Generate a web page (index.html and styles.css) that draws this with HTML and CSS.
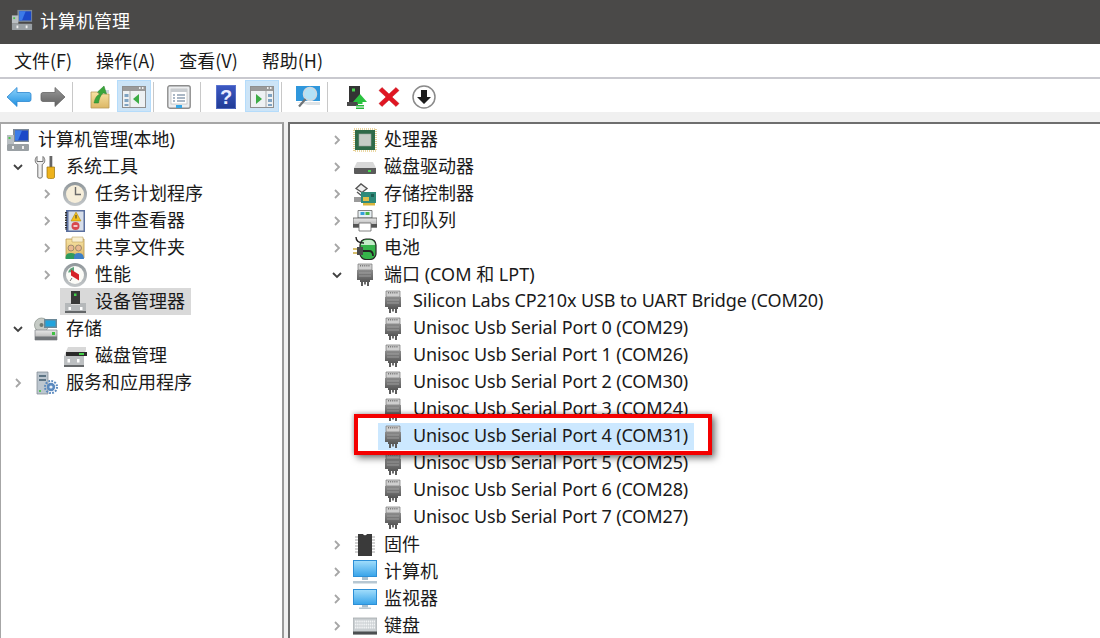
FILE: index.html
```html
<!DOCTYPE html>
<html lang="zh-CN">
<head>
<meta charset="utf-8">
<title>计算机管理</title>
<link rel="stylesheet" href="styles.css">
</head>
<body>
<svg class="sprite" xmlns="http://www.w3.org/2000/svg" aria-hidden="true">
  <defs>
    <linearGradient id="gBlue" x1="0" y1="0" x2="0" y2="1"><stop offset="0" stop-color="#8fd3fb"/><stop offset="1" stop-color="#1e8fe0"/></linearGradient>
    <linearGradient id="gGray" x1="0" y1="0" x2="0" y2="1"><stop offset="0" stop-color="#9a9a9a"/><stop offset="1" stop-color="#5f5f5f"/></linearGradient>
    <linearGradient id="gFolder" x1="0" y1="0" x2="0" y2="1"><stop offset="0" stop-color="#f7e3a4"/><stop offset="1" stop-color="#dcb765"/></linearGradient>
    <linearGradient id="gScreen" x1="0" y1="0" x2="0" y2="1"><stop offset="0" stop-color="#9fdcfb"/><stop offset="1" stop-color="#3aa5ea"/></linearGradient>
    <linearGradient id="gHelp" x1="0" y1="0" x2="0" y2="1"><stop offset="0" stop-color="#3d59c4"/><stop offset="1" stop-color="#1f3a94"/></linearGradient>
    <linearGradient id="gMetal" x1="0" y1="0" x2="0" y2="1"><stop offset="0" stop-color="#e8e8e8"/><stop offset="1" stop-color="#a8a8a8"/></linearGradient>
    <linearGradient id="gPort" x1="0" y1="0" x2="0" y2="1"><stop offset="0" stop-color="#8c8c8c"/><stop offset="1" stop-color="#565656"/></linearGradient>
    <linearGradient id="gRing" x1="0" y1="0" x2="0" y2="1"><stop offset="0" stop-color="#8f969a"/><stop offset="1" stop-color="#c4c8ca"/></linearGradient>
  </defs>
  <symbol id="i-mgmt" viewBox="0 0 24 24">
    <rect x="7" y="1" width="16" height="13" fill="#7d8a99"/><rect x="9" y="2.500" width="13" height="10" fill="#1b49c8"/><path d="M9 2.500h7l-4 10H9z" fill="#3c7be8"/>
    <rect x="1" y="7" width="7" height="9" fill="#b9bec2"/><rect x="2.500" y="9" width="2" height="2" fill="#4cc34c"/>
    <rect x="1" y="16" width="22" height="7" rx="1" fill="#9aa0a4"/><rect x="6" y="18" width="2" height="3" fill="#eee"/><rect x="16" y="18" width="2" height="3" fill="#eee"/>
  </symbol>
  <symbol id="i-tools" viewBox="0 0 24 24">
    <path d="M3 1.500C.5 3.500 .5 8 3.800 9.500V22c0 1.500 4.400 1.500 4.400 0V9.500C11.500 8 11.500 3.500 9 1.500V6.500H3z" fill="#efefef" stroke="#707070" stroke-width="1"/>
    <rect x="15.500" y="1" width="2.800" height="11" fill="#666"/><path d="M13 12h7.500v10c0 1.200-1 1.700-3.500 1.700s-4-.5-4-1.700z" fill="#eeb31d" stroke="#9a7109" stroke-width=".7"/>
  </symbol>
  <symbol id="i-clock" viewBox="0 0 24 24">
    <circle cx="12" cy="12" r="12" fill="url(#gRing)"/><circle cx="12" cy="12" r="9" fill="#f6eeda"/><path d="M12.500 5v7.500H18" fill="none" stroke="#6a6a6a" stroke-width="1.400"/>
  </symbol>
  <symbol id="i-event" viewBox="0 0 24 24">
    <rect x="3" y="1" width="19" height="22" fill="#5a6f9e"/><rect x="5.500" y="2.500" width="15" height="19" fill="#d8dfea"/><path d="M3 3v18" stroke="#333" stroke-width="2" stroke-dasharray="1.500 1"/>
    <path d="M13 3l5 9H8z" fill="#f3c01c" stroke="#a67d00" stroke-width=".5"/><rect x="12.500" y="6" width="1" height="3.500" fill="#333"/>
    <circle cx="12.500" cy="17" r="4" fill="#d8484f"/><rect x="10.500" y="16.300" width="4" height="1.400" fill="#fff"/>
  </symbol>
  <symbol id="i-share" viewBox="0 0 24 24">
    <path d="M3 3h18v19H3z" fill="url(#gFolder)" stroke="#b7954c" stroke-width=".8"/><path d="M9 1h11v5H9z" fill="#f8efd2" stroke="#b7954c" stroke-width=".5"/>
    <circle cx="8" cy="12" r="3" fill="#e9b98f" stroke="#555" stroke-width=".5"/><path d="M2.500 23c0-5 2-6 5.500-6s5 1 5.500 6z" fill="#2e9a5c"/>
    <circle cx="15.500" cy="12" r="3" fill="#e9b98f" stroke="#555" stroke-width=".5"/><path d="M11 23c0-5 1.500-6 4.500-6s5 1 5.500 6z" fill="#3d7fc6"/>
  </symbol>
  <symbol id="i-perf" viewBox="0 0 24 24">
    <circle cx="12" cy="12" r="12" fill="url(#gRing)"/><circle cx="12" cy="12" r="9" fill="#fbfbf7"/><path d="M5 9.500a8 8 0 0 1 6-5.500v5z" fill="#5aa27a"/><path d="M8 6.500v6l8 5v-6z" fill="#d6242a"/><path d="M9 15l-2 3" stroke="#777" stroke-width="1"/>
  </symbol>
  <symbol id="i-devmgr" viewBox="0 0 24 24">
    <rect x="8" y="1" width="9" height="13" fill="#383838"/><rect x="11" y="3.500" width="2.500" height="2.500" fill="#43d14a"/>
    <path d="M2 13h6v2h9v-2h6v10H2z" fill="#b5b8ba"/><rect x="2" y="21" width="21" height="2" fill="#636668"/><rect x="5.500" y="17" width="2.500" height="3" fill="#fff"/><rect x="17" y="17" width="2.500" height="3" fill="#fff"/>
  </symbol>
  <symbol id="i-storage" viewBox="0 0 24 24">
    <circle cx="7.500" cy="8" r="7" fill="#c6cbc6" stroke="#88908a" stroke-width=".7"/><circle cx="7.500" cy="8" r="2" fill="#6f7a72"/>
    <path d="M10 2h13v9H10z" fill="#6b8898"/><rect x="11.500" y="3.500" width="10" height="6" fill="#21a3dc"/>
    <path d="M1 13h22v10H1z" fill="url(#gMetal)" stroke="#7f8386" stroke-width=".7"/><rect x="1" y="19.500" width="22" height="3.500" fill="#717579"/><rect x="18" y="15" width="3" height="3" fill="#3fc043"/>
  </symbol>
  <symbol id="i-disk" viewBox="0 0 24 24">
    <path d="M5 3h18v3l-3 6H1z" fill="#d8d8d8"/><path d="M3 8h21v4H3z" fill="#2b2b2b"/><rect x="16" y="9" width="5" height="2" fill="#46d14a"/>
    <path d="M1 12h20v11H1z" fill="#bcbfc1"/><rect x="1" y="21" width="20" height="2" fill="#66696b"/><rect x="4.500" y="15" width="2.500" height="3.500" fill="#fff"/><rect x="14" y="15" width="2.500" height="3.500" fill="#fff"/>
  </symbol>
  <symbol id="i-services" viewBox="0 0 24 24">
    <path d="M3 1h11v22H3z" fill="#bcc6cf" stroke="#7b858e" stroke-width=".7"/><rect x="5" y="4" width="7" height="2" fill="#5d7484"/><rect x="5" y="8" width="7" height="2" fill="#5d7484"/><rect x="5" y="19" width="2" height="2" fill="#5ac45a"/>
    <circle cx="17" cy="16" r="4.200" fill="#5a89bf"/><circle cx="17" cy="16" r="6" fill="none" stroke="#5a89bf" stroke-width="2" stroke-dasharray="1.800 1.300"/><circle cx="17" cy="16" r="1.600" fill="#e8f0f8"/>
  </symbol>
  <symbol id="i-cpu" viewBox="0 0 24 24">
    <rect x="1" y="1" width="22" height="22" fill="none" stroke="#d8b14a" stroke-width="1.200" stroke-dasharray="1 1"/>
    <rect x="2" y="2" width="20" height="20" fill="#2f6a48"/><rect x="6" y="6" width="12" height="12" fill="#c6cdc6" stroke="#9aa39a" stroke-width=".6"/>
  </symbol>
  <symbol id="i-hdd" viewBox="0 0 24 24">
    <path d="M4 7h16l3 6H1z" fill="#d8d8d8"/><path d="M1 13h22v5a1 1 0 0 1-1 1H2a1 1 0 0 1-1-1z" fill="#5a5a5a"/><rect x="15" y="15" width="3" height="2" fill="#49d94f"/>
  </symbol>
  <symbol id="i-ctrl" viewBox="0 0 24 24">
    <path d="M3 6.500L8 2l6 4.500-5 4z" fill="#f0f0f0" stroke="#555" stroke-width="1.400"/><path d="M4 10l5 4 5-1" fill="none" stroke="#555" stroke-width="1.400"/>
    <path d="M1 15h11v5H1z" fill="#9a9a9a"/><rect x="8" y="10" width="15" height="11" fill="#2f8b7a"/><rect x="10" y="15" width="6" height="4" fill="#e0c04a"/><rect x="18" y="12" width="3" height="3" fill="#1d5f52"/><path d="M10 21h12v2.500H10z" fill="#d9b53d"/>
  </symbol>
  <symbol id="i-printer" viewBox="0 0 24 24">
    <path d="M5 1.500h14V9H5z" fill="#e8f0f4" stroke="#666" stroke-width=".8"/><rect x="7.500" y="3" width="4" height="3" fill="#34a0d8"/><rect x="12.500" y="3" width="4" height="3" fill="#45b649"/>
    <path d="M0 9h24v9H0z" fill="url(#gMetal)" stroke="#555" stroke-width=".8"/><rect x="0" y="15" width="24" height="3.500" fill="#555"/><path d="M6 14h12v8H6z" fill="#fff" stroke="#666" stroke-width=".8"/>
  </symbol>
  <symbol id="i-battery" viewBox="0 0 24 24">
    <rect x="7" y="3" width="16" height="20.500" rx="6" fill="#35b34a" stroke="#262626" stroke-width="1.200"/><path d="M8 9a6 6 0 0 1 6-5h3a5 5 0 0 1 5 5z" fill="#c6ecca"/>
    <path d="M3 1c0 4 3 6 8 6" fill="none" stroke="#222" stroke-width="1.400"/><path d="M4 11h6v8H4z" fill="#4a4a4a"/><path d="M0 13h4M0 17h4" stroke="#c9a93e" stroke-width="1.600"/><path d="M10 15h6c3 0 4 2 4 5" fill="none" stroke="#222" stroke-width="1.800"/>
  </symbol>
  <symbol id="i-port" viewBox="0 0 24 24">
    <path d="M5 1h14v6H5z" fill="#cfcfcf" stroke="#777" stroke-width=".7"/><path d="M7 2.800h10" stroke="#777" stroke-width="1.600" stroke-dasharray="1.100 1"/>
    <path d="M4 7h16v10h-3v2H7v-2H4z" fill="url(#gPort)"/><path d="M6 10h12M6 13h12" stroke="#a8a8a8" stroke-width=".8"/><path d="M8 19h2v4H8zM14 19h2v4h-2z" fill="#5c5c5c"/><rect x="11" y="19" width="2" height="2.500" fill="#6c6c6c"/>
  </symbol>
  <symbol id="i-fw" viewBox="0 0 24 24">
    <path d="M5 1h5a2.200 2.200 0 0 0 4 0h5v22H5z" fill="#3a3a3a"/><path d="M2 4h3M2 7h3M2 10h3M2 13h3M2 16h3M2 19h3M19 4h3M19 7h3M19 10h3M19 13h3M19 16h3M19 19h3" stroke="#c4c4c4" stroke-width="1.700"/>
  </symbol>
  <symbol id="i-pc" viewBox="0 0 24 24">
    <rect x="0" y="0" width="24" height="17" fill="#2d8fd6"/><rect x="1" y="1" width="22" height="15" fill="url(#gScreen)"/><rect x="9" y="17" width="6" height="3" fill="#a9c0cf"/><rect x="0" y="21" width="24" height="2.500" fill="#b7c7d2"/>
  </symbol>
  <symbol id="i-mon" viewBox="0 0 24 24">
    <rect x="0" y="2" width="24" height="16" fill="#2d8fd6"/><rect x="1" y="3" width="22" height="14" fill="url(#gScreen)"/><rect x="9" y="18" width="6" height="2.500" fill="#a9c0cf"/><rect x="6" y="20.500" width="12" height="1.500" fill="#b7c7d2"/>
  </symbol>
  <symbol id="i-kbd" viewBox="0 0 24 24">
    <rect x="0" y="4" width="24" height="16" fill="#c9ced1" stroke="#9aa0a3" stroke-width=".7"/><path d="M2 7.500h20M2 10.500h20M2 13.500h20" stroke="#f2f4f5" stroke-width="1.800" stroke-dasharray="1.500 .6"/><rect x="0" y="17.500" width="24" height="3" fill="#4c4f51"/>
  </symbol>
  <symbol id="t-back" viewBox="0 0 26 24">
    <path d="M1 12L11 2.500V7.500H23a2 2 0 0 1 2 2v5a2 2 0 0 1-2 2H11v5z" fill="url(#gBlue)" stroke="#2b87d1" stroke-width=".8"/>
  </symbol>
  <symbol id="t-fwd" viewBox="0 0 26 24">
    <path d="M25 12L15 2.500V7.500H3a2 2 0 0 0-2 2v5a2 2 0 0 0 2 2h12v5z" fill="url(#gGray)" stroke="#666" stroke-width=".8"/>
  </symbol>
  <symbol id="t-up" viewBox="0 0 24 24">
    <path d="M3 7h6l2 2h10v14H3z" fill="url(#gFolder)" stroke="#b89a58" stroke-width=".8"/><path d="M16 5h5v3h-5z" fill="#cfd6dc"/>
    <path d="M6 18c1-5 3-8 6-9L9.500 7 16 1l2.500 8-3-1c-2 1-4 4-5 10z" fill="#3aa53a" stroke="#26832a" stroke-width=".5"/>
  </symbol>
  <symbol id="t-left" viewBox="0 0 24 24">
    <rect x=".5" y="1.500" width="23" height="21" fill="#eef1f3" stroke="#8f8f8f"/><rect x="1" y="2" width="22" height="4" fill="#9a9a9a"/><path d="M17 3h1.500M20 3h1.500" stroke="#eee" stroke-width="2"/>
    <path d="M8 6v16" stroke="#aaa"/><path d="M2.500 9h4v3h-4zM2.500 14h4v3h-4zM2.500 19h4v2h-4z" fill="#7fa3c2"/><path d="M17 9v10l-6-5z" fill="#3cac45"/>
  </symbol>
  <symbol id="t-right" viewBox="0 0 24 24">
    <rect x=".5" y="1.500" width="23" height="21" fill="#eef1f3" stroke="#8f8f8f"/><rect x="1" y="2" width="22" height="4" fill="#9a9a9a"/><path d="M17 3h1.500M20 3h1.500" stroke="#eee" stroke-width="2"/>
    <path d="M16 6v16" stroke="#aaa"/><path d="M18 9h4v3h-4zM18 14h4v3h-4zM18 19h4v2h-4z" fill="#7fa3c2"/><path d="M6 9v10l6-5z" fill="#3cac45"/>
  </symbol>
  <symbol id="t-props" viewBox="0 0 24 24">
    <rect x=".8" y=".8" width="22.400" height="22.400" rx="2" fill="#eceef0" stroke="#8c8c8c" stroke-width="1.400"/><rect x="4" y="4" width="16" height="15" fill="#fff" stroke="#b0b0b0" stroke-width=".6"/><rect x="4" y="4" width="16" height="3" fill="#c8ccd0"/>
    <path d="M6 10h2M6 13h2M6 16h2M10 10h8M10 13h8M10 16h8" stroke="#8ea0b3" stroke-width="1.300"/><rect x="9" y="20" width="6" height="3" fill="#37a7e6"/>
  </symbol>
  <symbol id="t-search" viewBox="0 0 24 24">
    <rect x="0" y="1" width="24" height="15" fill="#2f97dc"/><path d="M0 17h24v3H12z" fill="#dfe3e6"/><circle cx="14" cy="9" r="6.500" fill="#b3e2f7" stroke="#cfd8de" stroke-width="1.500"/><path d="M9.500 14L3 21.500" stroke="#6d7377" stroke-width="2.200"/>
  </symbol>
  <symbol id="t-update" viewBox="0 0 24 24">
    <rect x="4" y="1" width="11" height="16" fill="#333"/><rect x="7" y="3.500" width="3" height="3" fill="#47d14c"/><path d="M2 17h11v4H2z" fill="#4a4a4a"/><path d="M11 24v-1.500h8V24zM11 21.500V20h8v1.500z" fill="#27b93a"/><path d="M15 9l7 8h-4.500v2h-5v-2H8z" fill="#2ac23f"/>
  </symbol>
  <symbol id="t-x" viewBox="0 0 22 22">
    <path d="M4 1.500L11 8l7-6.500L21 4.500 14 11l7 6.500-3 3L11 14l-7 6.500-3-3L8 11 1 4.500z" fill="#e01522" stroke="#c01018" stroke-width=".5"/>
  </symbol>
  <symbol id="t-down" viewBox="0 0 24 24">
    <circle cx="12" cy="12" r="11" fill="#fff" stroke="#8a8a8a" stroke-width="1.500"/><path d="M9 5h6v7h4l-7 7-7-7h4z" fill="#1c1c1c"/>
  </symbol>
  <symbol id="c-closed" viewBox="0 0 10 12"><path d="M3 2l4 4-4 4" fill="none" stroke="#a6a6a6" stroke-width="1.800"/></symbol>
  <symbol id="c-open" viewBox="0 0 12 10"><path d="M2 3l4 4 4-4" fill="none" stroke="#404040" stroke-width="1.800"/></symbol>
</svg>

<div class="window">
  <header class="titlebar">
    <svg class="title-icon"><use href="#i-mgmt"/></svg>
    <span class="title-text">计算机管理</span>
  </header>

  <nav class="menubar">
    <span class="menu">文件(F)</span>
    <span class="menu">操作(A)</span>
    <span class="menu">查看(V)</span>
    <span class="menu">帮助(H)</span>
  </nav>

  <div class="toolbar">
    <div class="tool"><svg class="t26"><use href="#t-back"/></svg></div>
    <div class="tool"><svg class="t26"><use href="#t-fwd"/></svg></div>
    <div class="sep sep-a"></div>
    <div class="tool"><svg class="t24"><use href="#t-up"/></svg></div>
    <div class="tool on"><svg class="t24"><use href="#t-left"/></svg></div>
    <div class="sep sep-b"></div>
    <div class="tool"><svg class="t24"><use href="#t-props"/></svg></div>
    <div class="sep sep-c"></div>
    <div class="tool">
      <svg class="t-help" viewBox="0 0 20 24">
        <rect x="0" y="0" width="20" height="24" fill="url(#gHelp)"/>
        <rect x=".5" y=".5" width="19" height="23" fill="none" stroke="#6f85d8" stroke-width=".6"/>
        <text x="10" y="18.500" class="help-q">?</text>
      </svg>
    </div>
    <div class="tool on push"><svg class="t24"><use href="#t-right"/></svg></div>
    <div class="sep sep-d"></div>
    <div class="tool"><svg class="t24"><use href="#t-search"/></svg></div>
    <div class="sep sep-e"></div>
    <div class="tool narrow"><svg class="t24"><use href="#t-update"/></svg></div>
    <div class="tool narrow"><svg class="t22"><use href="#t-x"/></svg></div>
    <div class="tool narrow push3"><svg class="t24"><use href="#t-down"/></svg></div>
  </div>

  <div class="strip"></div>

  <main class="panes">
    <section class="pane pane-left">
      <div class="row root"><div class="item"><svg class="ico"><use href="#i-mgmt"/></svg><span class="label">计算机管理(本地)</span></div></div>
      <div class="row l1"><span class="twisty"><svg class="chev-open"><use href="#c-open"/></svg></span><div class="item"><svg class="ico"><use href="#i-tools"/></svg><span class="label">系统工具</span></div></div>
      <div class="row l2"><span class="twisty"><svg class="chev"><use href="#c-closed"/></svg></span><div class="item"><svg class="ico"><use href="#i-clock"/></svg><span class="label">任务计划程序</span></div></div>
      <div class="row l2"><span class="twisty"><svg class="chev"><use href="#c-closed"/></svg></span><div class="item"><svg class="ico"><use href="#i-event"/></svg><span class="label">事件查看器</span></div></div>
      <div class="row l2"><span class="twisty"><svg class="chev"><use href="#c-closed"/></svg></span><div class="item"><svg class="ico"><use href="#i-share"/></svg><span class="label">共享文件夹</span></div></div>
      <div class="row l2"><span class="twisty"><svg class="chev"><use href="#c-closed"/></svg></span><div class="item"><svg class="ico"><use href="#i-perf"/></svg><span class="label">性能</span></div></div>
      <div class="row l2"><span class="twisty"></span><div class="item sel-gray"><svg class="ico"><use href="#i-devmgr"/></svg><span class="label">设备管理器</span></div></div>
      <div class="row l1"><span class="twisty"><svg class="chev-open"><use href="#c-open"/></svg></span><div class="item"><svg class="ico"><use href="#i-storage"/></svg><span class="label">存储</span></div></div>
      <div class="row l2"><span class="twisty"></span><div class="item"><svg class="ico"><use href="#i-disk"/></svg><span class="label">磁盘管理</span></div></div>
      <div class="row l1"><span class="twisty"><svg class="chev"><use href="#c-closed"/></svg></span><div class="item"><svg class="ico"><use href="#i-services"/></svg><span class="label">服务和应用程序</span></div></div>
    </section>

    <section class="pane pane-right">
      <div class="row r1"><span class="twisty"><svg class="chev"><use href="#c-closed"/></svg></span><div class="item"><svg class="ico"><use href="#i-cpu"/></svg><span class="label">处理器</span></div></div>
      <div class="row r1"><span class="twisty"><svg class="chev"><use href="#c-closed"/></svg></span><div class="item"><svg class="ico"><use href="#i-hdd"/></svg><span class="label">磁盘驱动器</span></div></div>
      <div class="row r1"><span class="twisty"><svg class="chev"><use href="#c-closed"/></svg></span><div class="item"><svg class="ico"><use href="#i-ctrl"/></svg><span class="label">存储控制器</span></div></div>
      <div class="row r1"><span class="twisty"><svg class="chev"><use href="#c-closed"/></svg></span><div class="item"><svg class="ico"><use href="#i-printer"/></svg><span class="label">打印队列</span></div></div>
      <div class="row r1"><span class="twisty"><svg class="chev"><use href="#c-closed"/></svg></span><div class="item"><svg class="ico"><use href="#i-battery"/></svg><span class="label">电池</span></div></div>
      <div class="row r1"><span class="twisty"><svg class="chev-open"><use href="#c-open"/></svg></span><div class="item"><svg class="ico"><use href="#i-port"/></svg><span class="label">端口 (COM 和 LPT)</span></div></div>
      <div class="row r2"><span class="twisty"></span><div class="item"><svg class="ico"><use href="#i-port"/></svg><span class="label latin">Silicon Labs CP210x USB to UART Bridge (COM20)</span></div></div>
      <div class="row r2"><span class="twisty"></span><div class="item"><svg class="ico"><use href="#i-port"/></svg><span class="label latin">Unisoc Usb Serial Port 0 (COM29)</span></div></div>
      <div class="row r2"><span class="twisty"></span><div class="item"><svg class="ico"><use href="#i-port"/></svg><span class="label latin">Unisoc Usb Serial Port 1 (COM26)</span></div></div>
      <div class="row r2"><span class="twisty"></span><div class="item"><svg class="ico"><use href="#i-port"/></svg><span class="label latin">Unisoc Usb Serial Port 2 (COM30)</span></div></div>
      <div class="row r2"><span class="twisty"></span><div class="item"><svg class="ico"><use href="#i-port"/></svg><span class="label latin">Unisoc Usb Serial Port 3 (COM24)</span></div></div>
      <div class="row r2"><span class="twisty"></span><div class="item sel-blue"><svg class="ico"><use href="#i-port"/></svg><span class="label latin">Unisoc Usb Serial Port 4 (COM31)</span></div></div>
      <div class="row r2"><span class="twisty"></span><div class="item"><svg class="ico"><use href="#i-port"/></svg><span class="label latin">Unisoc Usb Serial Port 5 (COM25)</span></div></div>
      <div class="row r2"><span class="twisty"></span><div class="item"><svg class="ico"><use href="#i-port"/></svg><span class="label latin">Unisoc Usb Serial Port 6 (COM28)</span></div></div>
      <div class="row r2"><span class="twisty"></span><div class="item"><svg class="ico"><use href="#i-port"/></svg><span class="label latin">Unisoc Usb Serial Port 7 (COM27)</span></div></div>
      <div class="row r1"><span class="twisty"><svg class="chev"><use href="#c-closed"/></svg></span><div class="item"><svg class="ico"><use href="#i-fw"/></svg><span class="label">固件</span></div></div>
      <div class="row r1"><span class="twisty"><svg class="chev"><use href="#c-closed"/></svg></span><div class="item"><svg class="ico"><use href="#i-pc"/></svg><span class="label">计算机</span></div></div>
      <div class="row r1"><span class="twisty"><svg class="chev"><use href="#c-closed"/></svg></span><div class="item"><svg class="ico"><use href="#i-mon"/></svg><span class="label">监视器</span></div></div>
      <div class="row r1"><span class="twisty"><svg class="chev"><use href="#c-closed"/></svg></span><div class="item"><svg class="ico"><use href="#i-kbd"/></svg><span class="label">键盘</span></div></div>
    </section>
  </main>

  <div class="callout"></div>
</div>
</body>
</html>
```

FILE: styles.css
```css
* { box-sizing: border-box; }
html, body { margin: 0; padding: 0; height: 100%; overflow: hidden; background: #fff; }
body { font-family: "Noto Sans", "Noto Sans CJK SC", sans-serif; font-size: 18px; color: #1a1a1a; }
.sprite { position: absolute; width: 0; height: 0; overflow: hidden; }
.help-q { font-family: "Liberation Sans", sans-serif; font-size: 20px; font-weight: 700; fill: #e8ecff; text-anchor: middle; }

.window { position: relative; width: 1100px; height: 638px; display: flex; flex-direction: column; overflow: hidden; }

.titlebar { flex: 0 0 44px; background: #4a4948; display: flex; align-items: center; padding: 0 0 4px 11px; color: #fff; }
.title-icon { width: 22px; height: 22px; }
.title-text { margin-left: 7px; font-family: "Noto Sans CJK SC", sans-serif; font-size: 18px; }

.menubar { flex: 0 0 35px; display: flex; align-items: center; padding: 0 0 1px 14px; gap: 24px; border-bottom: 2px solid #c9c9cf; }
.menu { font-family: "Noto Sans CJK SC", sans-serif; font-size: 18px; }

.toolbar { flex: 0 0 33px; display: flex; align-items: stretch; padding-left: 2px; padding-top: 1px; background: #fff; }
.tool { width: 34px; padding-top: 2px; display: flex; align-items: center; justify-content: center; }
.tool.narrow { width: 32px; }
.tool.on { background: #cce4f7; box-shadow: inset 0 0 0 1px #b5dcfb; }
.tool.push { margin-left: 2px; }
.tool.push3 { margin-left: 3px; }
.t26 { width: 26px; height: 24px; }
.t24 { width: 24px; height: 24px; }
.t22 { width: 22px; height: 22px; }
.t-help { width: 20px; height: 24px; }
.sep { width: 1px; margin: 2px 0 0; background: #c8c8c8; }
.sep-a { margin-left: 2px; margin-right: 10px; }
.sep-b { margin-left: 2px; margin-right: 8px; }
.sep-c { margin-left: 4px; margin-right: 8px; }
.sep-d { margin-left: 2px; margin-right: 9px; }
.sep-e { margin-left: 2px; margin-right: 13px; }

.strip { flex: 0 0 10px; background: #f0f0f0; }

.panes { flex: 1; min-height: 0; display: flex; gap: 4px; background: #f0f0f0; }
.pane { background: #fff; overflow: hidden; padding-top: 2px; }
.pane-left { flex: 0 0 284px; border-style: solid; border-width: 2px 2px 0 1px; border-color: #a6a6a6 #9a9a9a #a6a6a6 #a6a6a6; }
.pane-right { flex: 1; border-style: solid; border-width: 2px 0 0 2px; border-color: #6e6e6e; }

.row { height: 27px; display: flex; align-items: stretch; }
.root { padding-left: 2px; }
.root .item { margin-left: 0; }
.l1 { padding-left: 7px; }
.l2 { padding-left: 36px; }
.r1 { padding-left: 37px; }
.r2 { padding-left: 65px; }
.twisty { width: 20px; display: flex; align-items: center; justify-content: center; }
.chev { width: 10px; height: 12px; }
.chev-open { width: 12px; height: 10px; }
.item { margin-left: 3px; padding: 0 6px 0 3px; display: flex; align-items: center; }
.ico { width: 24px; height: 24px; flex: none; }
.label { margin-left: 8px; white-space: nowrap; line-height: 27px; }
.r1 .label { margin-left: 7px; }
.latin { line-height: 25px; padding-bottom: 2px; letter-spacing: -.12px; }
.sel-gray { background: #d9d9d9; }
.sel-blue { background: #cce8ff; }

.callout { position: absolute; left: 354px; top: 414px; width: 358px; height: 41px; border: 4px solid #f40000; box-shadow: 3px 3px 7px rgba(0, 0, 0, .55), -1px -1px 4px rgba(0, 0, 0, .2); }
```
